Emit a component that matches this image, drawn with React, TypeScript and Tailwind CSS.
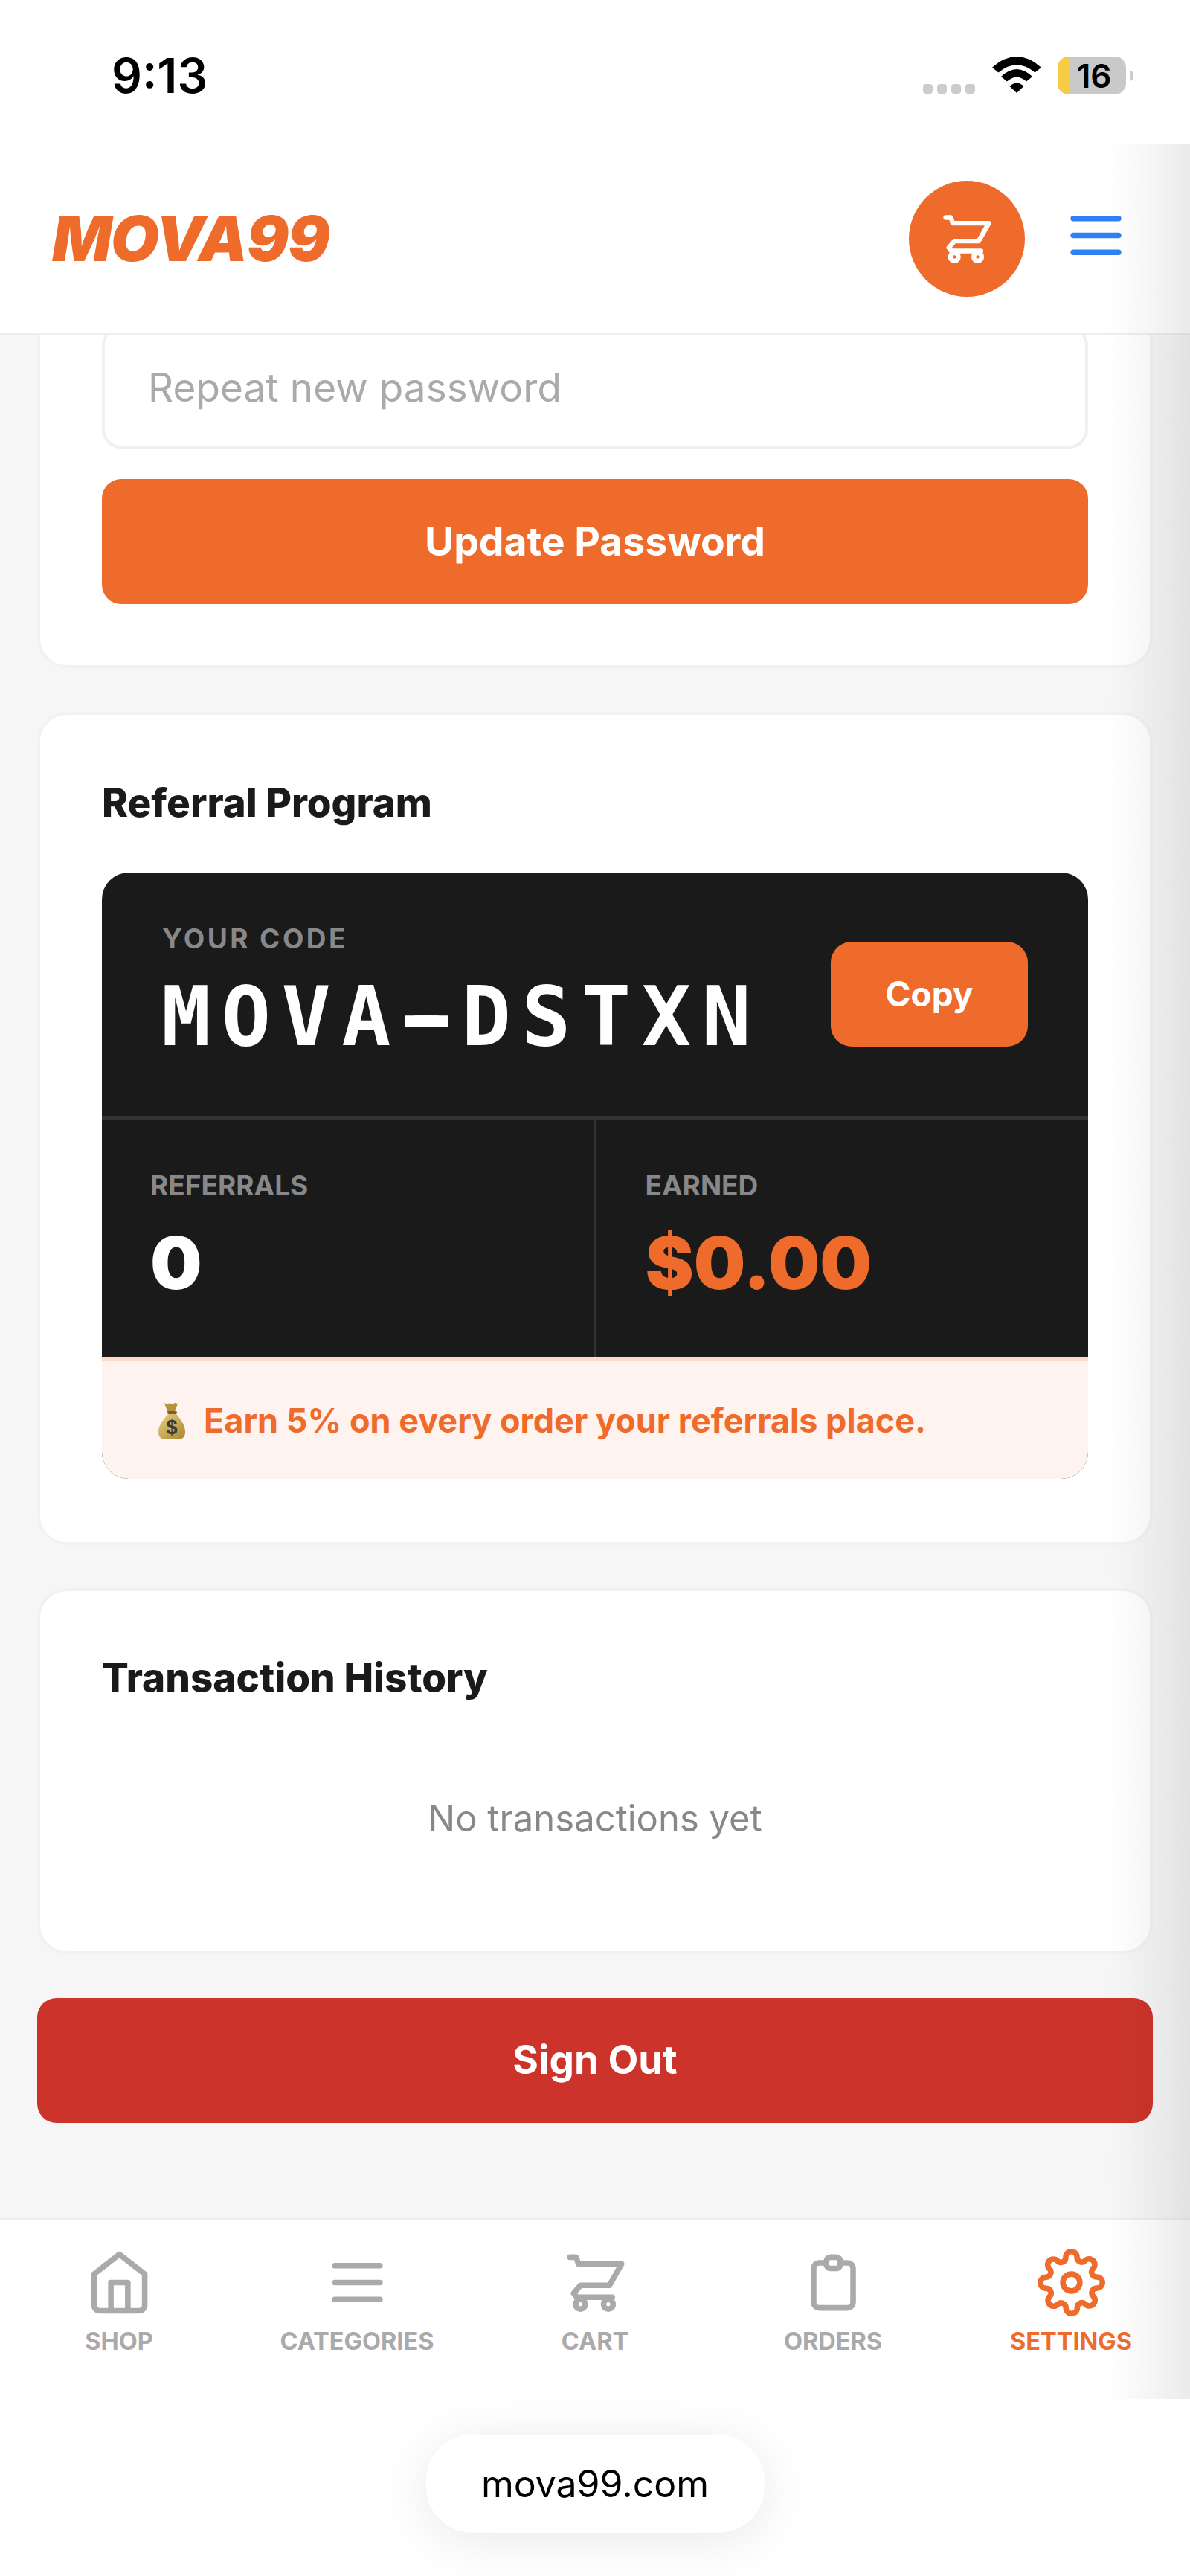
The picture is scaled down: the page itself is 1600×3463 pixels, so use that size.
import { FiSettings } from "react-icons/fi";

const INTER = "font-['Inter',sans-serif]";

function CartIcon({ className }: { className: string }) {
  return (
    <svg viewBox="0 0 24 24" fill="none" stroke="currentColor" strokeWidth={2} strokeLinecap="round" strokeLinejoin="round" className={className}>
      <path d="M3 3h2.2L6 5.4h15.3L17 13H6.7l-2.4 2.8 1.1 1.4H18" />
      <circle cx="6.7" cy="19.7" r="1.7" />
      <circle cx="16.6" cy="19.7" r="1.7" />
    </svg>
  );
}

function MenuIcon({ className }: { className: string }) {
  return (
    <svg viewBox="0 0 24 24" fill="none" stroke="currentColor" strokeWidth={2} strokeLinecap="round" className={className}>
      <path d="M4 6h16M4 12h16M4 18h16" />
    </svg>
  );
}

function HomeIcon({ className }: { className: string }) {
  return (
    <svg viewBox="0 0 24 24" fill="none" stroke="currentColor" strokeWidth={2} strokeLinecap="round" strokeLinejoin="round" className={className}>
      <path d="M3 9l9-7 9 7v11a2 2 0 0 1-2 2H5a2 2 0 0 1-2-2z" />
      <path d="M9 22V12h6v10" />
    </svg>
  );
}

function ClipboardIcon({ className }: { className: string }) {
  return (
    <svg viewBox="0 0 24 24" fill="none" stroke="currentColor" strokeWidth={2} strokeLinecap="round" strokeLinejoin="round" className={className}>
      <path d="M9.5 5H7a2 2 0 0 0-2 2v12a2 2 0 0 0 2 2h10a2 2 0 0 0 2-2V7a2 2 0 0 0-2-2h-2.5" />
      <rect x="9.5" y="3" width="5" height="4" rx="1.5" />
    </svg>
  );
}

function WifiIcon() {
  return (
    <svg viewBox="0 0 66 49" className="h-[49px] w-[66px]" fill="#000">
      <path d="M0 14.7Q33-14.5 66 14.7L57.5 21.5Q33 1 8.5 21.5Z" />
      <path d="M12 27Q33 7 54 27L46 33.5Q33 22 20 33.5Z" />
      <path d="M23.5 40Q33 31 42.5 40L33 49Z" />
    </svg>
  );
}

function MoneyBag() {
  return (
    <svg viewBox="0 0 38 50" className="h-[50px] w-[38px] shrink-0" aria-hidden="true">
      <defs>
        <linearGradient id="bag" x1="0" y1="0" x2="1" y2="1">
          <stop offset="0" stopColor="#e8cf82" />
          <stop offset="1" stopColor="#a9852f" />
        </linearGradient>
      </defs>
      <path d="M9 1l4 2 3-2 3 2 4-2 4 1-5 13H14z" fill="#b5923f" />
      <rect x="13" y="12" width="13" height="4" rx="2" fill="#7d5f22" />
      <path d="M14 16h11c5 6 12 14 12 24 0 7-4 10-10 10H11C5 50 1 47 1 40c0-10 8-18 13-24z" fill="url(#bag)" />
      <text x="19" y="43" textAnchor="middle" fontSize="27" fill="#3b3a3a" fontFamily="Liberation Sans, sans-serif">$</text>
    </svg>
  );
}

function Card({ className, children }: { className: string; children: React.ReactNode }) {
  return (
    <div className={`rounded-[40px] border-4 border-[#f2f2f2] bg-white px-[83px] ${className}`}>
      {children}
    </div>
  );
}

function StatBlock({ label, value, tone, pad }: { label: string; value: string; tone: string; pad: string }) {
  return (
    <div className={`flex-1 pt-[67px] ${pad}`}>
      <div className="text-[37px] leading-[44px] font-bold text-[#888888]">{label}</div>
      <div className={`mt-[22px] text-[98px] leading-[120px] font-black ${tone}`}>{value}</div>
    </div>
  );
}

const navItems = [
  { label: "SHOP", icon: <HomeIcon className="h-[91px] w-[91px]" /> },
  { label: "CATEGORIES", icon: <MenuIcon className="h-[91px] w-[91px]" /> },
  { label: "CART", icon: <CartIcon className="h-[91px] w-[91px]" /> },
  { label: "ORDERS", icon: <ClipboardIcon className="h-[91px] w-[91px]" /> },
  { label: "SETTINGS", icon: <FiSettings className="h-[91px] w-[91px]" />, active: true },
];

export default function App() {
  return (
    <div className={`relative flex h-[3463px] w-[1600px] flex-col overflow-hidden bg-white ${INTER}`}>
      {/* status bar */}
      <div className="relative flex h-[193px] shrink-0 items-start justify-between pt-[67px] pr-[76px] pl-[150px]">
        <div className="text-[64px] leading-[70px] font-semibold text-black">9:13</div>
        <div className="flex items-start pt-[9px]">
          <div className="mt-[37px] flex gap-[6px]">
            <span className="h-[13px] w-[13px] rounded-[4px] bg-[#cccccc]" />
            <span className="h-[13px] w-[13px] rounded-[4px] bg-[#cccccc]" />
            <span className="h-[13px] w-[13px] rounded-[4px] bg-[#cccccc]" />
            <span className="h-[13px] w-[13px] rounded-[4px] bg-[#cccccc]" />
          </div>
          <div className="ml-[23px]">
            <WifiIcon />
          </div>
          <div className="ml-[22px] flex items-center">
            <div className="relative flex h-[51px] w-[92px] items-center justify-center overflow-hidden rounded-[15px] bg-[#c9c9c9]">
              <span className="absolute top-0 bottom-0 left-0 w-[16px] bg-[#f7cc45]" />
              <span className="relative pl-[6px] text-[44px] leading-none font-semibold text-black">16</span>
            </div>
            <span className="ml-[5px] h-[14px] w-[5px] rounded-r-full bg-[#cccccc]" />
          </div>
        </div>
      </div>

      {/* header */}
      <div className="flex h-[258px] shrink-0 items-center justify-between border-b-[3px] border-[#eeeeee] bg-white pr-[81px] pl-[70px]">
        <div className="text-[84px] leading-none font-black tracking-[-1.5px] text-[#ef6b2b] italic">MOVA99</div>
        <div className="flex items-center gap-[50px]">
          <div className="flex h-[156px] w-[156px] items-center justify-center rounded-full bg-[#ef6b2b] text-white">
            <CartIcon className="h-[76px] w-[76px]" />
          </div>
          <MenuIcon className="-mt-[9px] h-[91px] w-[91px] text-[#2f80f5]" />
        </div>
      </div>

      {/* scrolled page */}
      <div className="flex h-[2531px] shrink-0 flex-col overflow-hidden bg-[#f6f6f6] px-[50px]">
        <Card className="-mt-[100px] shrink-0 pt-[84px] pb-[82px]">
          <input
            readOnly
            placeholder="Repeat new password"
            className="h-[164px] w-full rounded-[26px] border-4 border-[#f0f0f0] bg-white px-[58px] text-[53px] tracking-[0.1px] text-[#333333] outline-none placeholder:text-[#aaaaaa]"
          />
          <button className="mt-[41px] flex h-[168px] w-full items-center justify-center rounded-[26px] bg-[#ef6b2b] text-[53.5px] font-bold text-white">
            Update Password
          </button>
        </Card>

        <Card className="mt-[59px] shrink-0 pt-[83px] pb-[85px]">
          <div className="text-[53px] leading-[70px] font-extrabold text-[#1a1a1a]">Referral Program</div>
          <div className="mt-[59px] overflow-hidden rounded-[36px] bg-[#1a1a1a]">
            <div className="flex h-[327px] items-center justify-between pr-[81px] pl-[80px]">
              <div className="pb-[6px]">
                <div className="ml-[1px] text-[37px] leading-[44px] font-bold tracking-[3.4px] text-[#888888]">YOUR CODE</div>
                <div className="mt-[23px] font-['DejaVu_Sans_Mono',monospace] text-[110px] leading-[120px] font-bold tracking-[14.5px] text-white">
                  MOVA<span className="[text-shadow:12px_0_0_#fff,-12px_0_0_#fff]">-</span>DSTXN
                </div>
              </div>
              <button className="flex h-[141px] w-[265px] items-center justify-center rounded-[28px] bg-[#ef6b2b] text-[46px] font-bold text-white">
                Copy
              </button>
            </div>
            <div className="flex h-[324px] border-t-[5px] border-[#333333]">
              <StatBlock label="REFERRALS" value="0" tone="text-white" pad="border-r-4 border-[#333333] pl-[65px]" />
              <StatBlock label="EARNED" value="$0.00" tone="text-[#ef6b2b]" pad="pl-[66px]" />
            </div>
            <div className="flex h-[164px] items-center gap-[24px] border-t-[5px] border-[#fcdcc8] bg-[#fef3ee] pt-[2px] pl-[75px] text-[45px] font-bold text-[#ef6b2b]">
              <MoneyBag />
              <span>Earn 5% on every order your referrals place.</span>
            </div>
          </div>
        </Card>

        <Card className="mt-[58px] shrink-0 pt-[81px] pb-[143px]">
          <div className="text-[53px] leading-[70px] font-extrabold text-[#1a1a1a]">Transaction History</div>
          <div className="mt-[120px] text-center text-[49px] leading-[70px] text-[#888888]">No transactions yet</div>
        </Card>

        <button className="mt-[59px] flex h-[168px] w-full shrink-0 items-center justify-center rounded-[26px] bg-[#cc342b] text-[53px] font-bold text-white">
          Sign Out
        </button>
      </div>

      {/* bottom nav */}
      <div className="grid h-[243px] shrink-0 grid-cols-5 border-t-[3px] border-[#eeeeee] bg-white pt-[38px]">
        {navItems.map((item) => (
          <div key={item.label} className={`flex flex-col items-center ${item.active ? "text-[#ef6b2b]" : "text-[#aaaaaa]"}`}>
            {item.icon}
            <span className="mt-[12px] text-[32.5px] leading-[44px] font-bold">{item.label}</span>
          </div>
        ))}
      </div>

      {/* browser address pill */}
      <div className="flex flex-1 justify-center pt-[48px]">
        <div className="flex h-[132px] w-[455px] items-center justify-center rounded-[62px] bg-white text-[50px] text-black shadow-[0_10px_70px_rgba(0,0,0,0.09)]">
          mova99.com
        </div>
      </div>

      {/* edge shade laid over the app */}
      <div className="pointer-events-none absolute top-[193px] right-0 h-[3032px] w-[110px] bg-gradient-to-r from-black/0 via-black/[0.035] to-black/[0.08]" />
    </div>
  );
}
